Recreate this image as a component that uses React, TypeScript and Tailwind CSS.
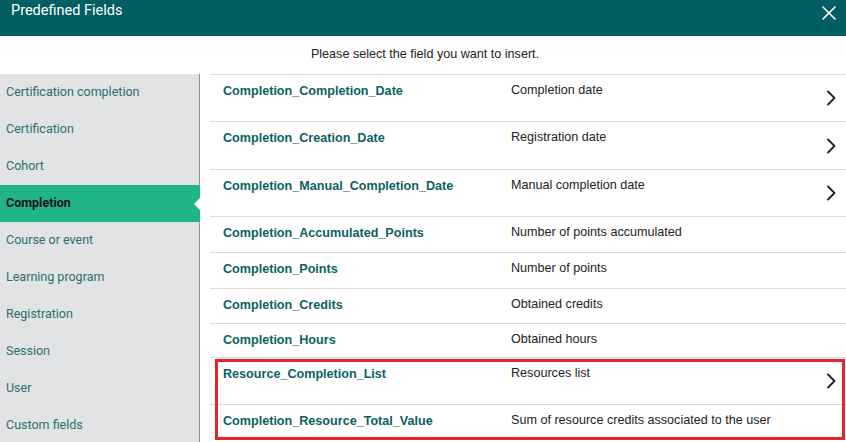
import React from 'react';

const categories = [
    'Certification completion',
    'Certification',
    'Cohort',
    'Completion',
    'Course or event',
    'Learning program',
    'Registration',
    'Session',
    'User',
    'Custom fields',
];

type Field = { name: string; label: string; more?: boolean; h: string };

const fields: Field[] = [
    { name: 'Completion_Completion_Date', label: 'Completion date', more: true, h: 'h-[47px]' },
    { name: 'Completion_Creation_Date', label: 'Registration date', more: true, h: 'h-[48px]' },
    { name: 'Completion_Manual_Completion_Date', label: 'Manual completion date', more: true, h: 'h-[47px]' },
    { name: 'Completion_Accumulated_Points', label: 'Number of points accumulated', h: 'h-[36px]' },
    { name: 'Completion_Points', label: 'Number of points', h: 'h-[36px]' },
    { name: 'Completion_Credits', label: 'Obtained credits', h: 'h-[35px]' },
    { name: 'Completion_Hours', label: 'Obtained hours', h: 'h-[34px]' },
];

const highlighted: Field[] = [
    { name: 'Resource_Completion_List', label: 'Resources list', more: true, h: 'h-[47px]' },
    { name: 'Completion_Resource_Total_Value', label: 'Sum of resource credits associated to the user', h: 'h-[38px]' },
];

function Chevron() {
    return (
        <svg width="10" height="16" viewBox="0 0 10 16" fill="none" stroke="#1f1f1f" strokeWidth="1.8" strokeLinecap="round" strokeLinejoin="round">
            <polyline points="2 1.5 8.5 8 2 14.5" />
        </svg>
    );
}

function FieldRow({ f }: { f: Field }) {
    return (
        <div className={`flex border-t border-[#dcdcdc] pl-[13px] pr-[10px] ${f.h}`}>
            <div className="w-[288px] pt-[7px] text-[12.6px] font-bold text-[#0c5f64]">{f.name}</div>
            <div className="flex-1 pt-[6px] text-[12.6px] text-[#222]">{f.label}</div>
            {f.more && (
                <div className="flex items-center">
                    <Chevron />
                </div>
            )}
        </div>
    );
}

export default function App() {
    return (
        <div className="w-[846px] h-[442px] overflow-hidden bg-white font-['Liberation_Sans',Arial,sans-serif]">
            {/* Header */}
            <div className="h-9 bg-[#025e63] flex items-start justify-between pl-[11px] pr-[10px] pt-[2px]">
                <span className="text-white text-[14.5px] font-['Roboto',sans-serif] leading-[18px]">Predefined Fields</span>
                <svg width="14" height="14" viewBox="0 0 14 14" className="mt-[4px]" stroke="#fff" strokeWidth="1.6" strokeLinecap="round">
                    <line x1="1" y1="1" x2="13" y2="13" />
                    <line x1="13" y1="1" x2="1" y2="13" />
                </svg>
            </div>

            <div className="h-[38px] flex items-center justify-center text-[12.6px] text-[#222] pb-[1px] pl-[4px]">
                Please select the field you want to insert.
            </div>

            <div className="flex h-[368px]">
                {/* Sidebar */}
                <div className="w-[200px] shrink-0 bg-[#e2e3e5] border-r border-[#8f8f8f] font-['Roboto',sans-serif] text-[12.5px]">
                    {categories.map((c) =>
                        c === 'Completion' ? (
                            <div key={c} className="relative h-[37px] flex items-center pl-[6px] bg-[#20b588] font-bold text-[#111] -mr-px">
                                {c}
                                <span className="absolute right-0 top-[13px] w-0 h-0 border-y-[6px] border-y-transparent border-r-[6px] border-r-white" />
                            </div>
                        ) : (
                            <div key={c} className="h-[37px] flex items-center pl-[6px] text-[#2b6e72]">
                                {c}
                            </div>
                        )
                    )}
                </div>

                {/* Field list */}
                <div className="flex-1 pl-[10px]">
                    {fields.map((f) => (
                        <FieldRow key={f.name} f={f} />
                    ))}
                    <div className="relative">
                        {highlighted.map((f) => (
                            <FieldRow key={f.name} f={f} />
                        ))}
                        <div className="absolute left-[5px] top-[2px] right-[1px] bottom-[2px] border-[3px] border-[#e8242b] pointer-events-none" />
                    </div>
                </div>
            </div>
        </div>
    );
}
